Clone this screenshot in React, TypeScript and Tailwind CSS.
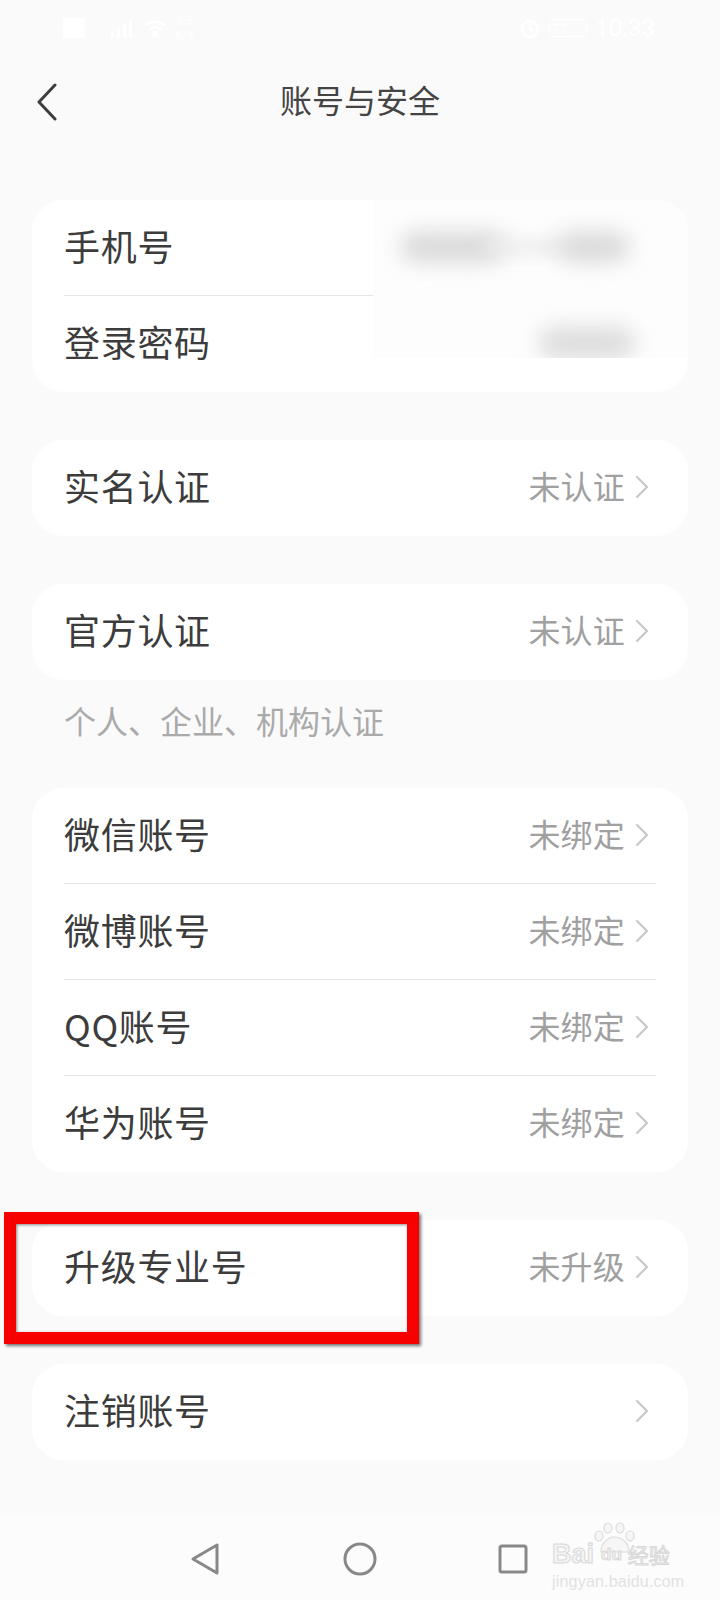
import React from "react";

const font = { fontFamily: '"Noto Sans CJK SC", "Noto Sans", sans-serif' };

function Chevron() {
  return (
    <svg width="14" height="24" viewBox="0 0 14 24" fill="none" className="ml-[10px] mt-[4px] shrink-0">
      <path d="M2 2 L12 12 L2 22" stroke="#c8c8c8" strokeWidth="2.2" strokeLinecap="round" strokeLinejoin="round" />
    </svg>
  );
}

function Row({ label, value, last }: { label: string; value?: string; last?: boolean }) {
  return (
    <div className="relative flex h-24 items-center justify-between pb-[6px] pl-8 pr-[39px]">
      <span className="text-[36px] leading-none tracking-[0.7px] text-[#3c3c3c]">{label}</span>
      <span className="flex items-center">
        {value && <span className="text-[32px] leading-none tracking-[0.2px] text-[#a0a0a0]">{value}</span>}
        <Chevron />
      </span>
      {!last && <div className="absolute bottom-0 left-8 right-8 h-px bg-[#e6e6e6]" />}
    </div>
  );
}

function Card({ children, className = "" }: { children: React.ReactNode; className?: string }) {
  return <div className={`overflow-hidden rounded-[32px] bg-white ${className}`}>{children}</div>;
}

function StatusBar() {
  return (
    <div className="flex h-[56px] items-center justify-between pl-[63px] pr-[65px] text-white">
      <div className="flex items-center gap-[8px]">
        <div className="h-[20px] w-[22px] rounded-[2px] bg-white" />
        <svg width="36" height="24" viewBox="0 0 36 24" fill="white" className="ml-[6px]">
          <rect x="12" y="16" width="3" height="6" />
          <rect x="18" y="12" width="3" height="10" />
          <rect x="24" y="8" width="3" height="14" />
          <rect x="30" y="3" width="3" height="19" />
        </svg>
        <svg width="24" height="20" viewBox="0 0 24 20" fill="none" stroke="white" strokeWidth="2.5">
          <path d="M2 8 C8 2 16 2 22 8" />
          <path d="M6 12 C10 8 14 8 18 12" />
          <circle cx="12" cy="16" r="2" fill="white" />
        </svg>
        <div className="flex flex-col text-center text-[12px] leading-[14px]" style={{ fontFamily: '"Roboto", sans-serif' }}>
          <span>4.5</span>
          <span>K/s</span>
        </div>
      </div>
      <div className="flex items-center gap-[8px]">
        <svg width="22" height="26" viewBox="0 0 22 26" fill="none" stroke="white" strokeWidth="2.5">
          <circle cx="11" cy="14" r="8" />
          <path d="M11 9 V14 L14 16" />
        </svg>
        <div className="flex h-[18px] w-[38px] items-center rounded-[2px] border border-white px-[2px] text-[13px] leading-none">77</div>
        <span className="text-[24px] leading-none" style={{ fontFamily: '"Roboto", sans-serif' }}>10:33</span>
      </div>
    </div>
  );
}

export default function App() {
  return (
    <div className="relative flex h-[1600px] w-[720px] flex-col overflow-hidden bg-[#fafafa]" style={font}>
      <StatusBar />

      <div className="relative flex h-[92px] items-center justify-center">
        <svg width="22" height="38" viewBox="0 0 22 38" fill="none" className="absolute left-[36px] top-[27px]">
          <path d="M19 2 L3 19 L19 36" stroke="#3c3c3c" strokeWidth="3" strokeLinecap="round" strokeLinejoin="round" />
        </svg>
        <span className="mt-[-6px] text-[32px] leading-none text-[#444444]">账号与安全</span>
      </div>

      <div className="flex flex-col px-8 pt-[52px]">
        <Card className="relative">
          <div className="relative flex h-24 items-center pb-[6px] pl-8">
            <span className="text-[36px] leading-none tracking-[0.7px] text-[#3c3c3c]">手机号</span>
            <div className="absolute bottom-0 left-8 h-px w-[309px] bg-[#e6e6e6]" />
          </div>
          <div className="relative flex h-24 items-center pb-[6px] pl-8">
            <span className="text-[36px] leading-none tracking-[0.7px] text-[#3c3c3c]">登录密码</span>
          </div>
          {/* blurred-out values */}
          <div className="absolute left-[341px] top-0 h-[158px] w-[315px] overflow-hidden bg-[#fdfdfd]">
            <div className="absolute left-[28px] top-[33px] h-[28px] w-[104px] rounded-full bg-[#d6d6d6] blur-[11px]" />
            <div className="absolute left-[110px] top-[40px] h-[14px] w-[80px] rounded-full bg-[#ececec] blur-[8px]" />
            <div className="absolute left-[184px] top-[33px] h-[28px] w-[72px] rounded-full bg-[#d6d6d6] blur-[11px]" />
            <div className="absolute left-[166px] top-[126px] h-[34px] w-[96px] rounded-full bg-[#dedede] blur-[10px]" />
          </div>
        </Card>

        <Card className="mt-12">
          <Row label="实名认证" value="未认证" last />
        </Card>

        <Card className="mt-12">
          <Row label="官方认证" value="未认证" last />
        </Card>

        <div className="flex h-[108px] items-start pl-8 pt-[24px]">
          <span className="text-[32px] leading-none text-[#aaaaaa]">个人、企业、机构认证</span>
        </div>

        <Card>
          <Row label="微信账号" value="未绑定" />
          <Row label="微博账号" value="未绑定" />
          <Row label="QQ账号" value="未绑定" />
          <Row label="华为账号" value="未绑定" last />
        </Card>

        <Card className="mt-12">
          <Row label="升级专业号" value="未升级" last />
        </Card>

        <Card className="mt-12">
          <Row label="注销账号" last />
        </Card>
      </div>

      {/* red annotation */}
      <div className="absolute left-[4px] top-[1212px] h-[132px] w-[415px] border-[12px] border-[#f60000] shadow-[2px_2px_3px_rgba(0,0,0,0.55),inset_1px_1px_3px_rgba(0,0,0,0.45)]" />

      {/* nav bar */}
      <div className="absolute bottom-0 left-0 right-0 flex h-[83px] items-center bg-[#fcfcfc]">
        <div className="flex w-full items-center justify-center pr-[2px]">
          <svg width="30" height="34" viewBox="0 0 30 34" fill="none">
            <path d="M27 3 V31 L3 17 Z" stroke="#888888" strokeWidth="3" strokeLinejoin="round" />
          </svg>
          <svg width="34" height="34" viewBox="0 0 34 34" fill="none" className="ml-[123px]">
            <circle cx="17" cy="17" r="15" stroke="#888888" strokeWidth="3" />
          </svg>
          <svg width="30" height="30" viewBox="0 0 30 30" fill="none" className="ml-[121px]">
            <rect x="2" y="2" width="26" height="26" rx="2" stroke="#888888" strokeWidth="3" />
          </svg>
        </div>
      </div>

      {/* watermark */}
      <div className="absolute left-[552px] top-[1522px] flex w-[130px] flex-col items-start text-[#f4f4f4]">
        <svg width="44" height="32" viewBox="0 0 44 32" fill="#f6f6f6" stroke="#dcdcdc" strokeWidth="1.2" className="absolute left-[41px] top-0">
          <ellipse cx="6" cy="14" rx="4" ry="5" />
          <ellipse cx="15" cy="6" rx="4" ry="5" />
          <ellipse cx="27" cy="6" rx="4" ry="5" />
          <ellipse cx="37" cy="14" rx="4" ry="5" />
          <path d="M8 30 C8 20 16 15 21 15 C28 15 36 20 36 30 Z" />
        </svg>
        <div className="relative mt-[19px] flex items-center text-[27px] font-bold leading-none [-webkit-text-stroke:1px_#d8d8d8]" style={{ fontFamily: '"Liberation Sans", sans-serif' }}>
          <span>Bai</span>
          <span className="ml-[7px] text-[17px]">du</span>
          <span className="ml-[6px] text-[21px] font-normal" style={font}>经验</span>
        </div>
        <span className="mt-[6px] text-[16px] leading-none tracking-[0.2px] text-[#e2e2e2]" style={{ fontFamily: '"Liberation Sans", sans-serif' }}>jingyan.baidu.com</span>
      </div>
    </div>
  );
}
